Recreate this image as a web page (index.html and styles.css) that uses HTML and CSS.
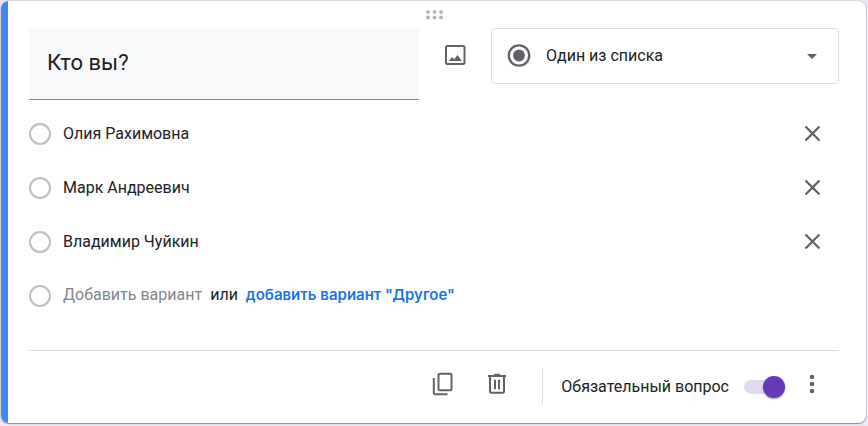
FILE: index.html
```html
<!DOCTYPE html>
<html lang="ru">
<head>
<meta charset="utf-8">
<title>Вопрос</title>
<link rel="stylesheet" href="styles.css">
</head>
<body>
<main class="card">
  <div class="drag">
    <svg width="18" height="10" viewBox="0 0 18 10" fill="#b4b4b4" aria-hidden="true"><circle cx="3" cy="2" r="1.900"/><circle cx="9.500" cy="2" r="1.900"/><circle cx="16" cy="2" r="1.900"/><circle cx="3" cy="7.500" r="1.900"/><circle cx="9.500" cy="7.500" r="1.900"/><circle cx="16" cy="7.500" r="1.900"/></svg>
  </div>
  <header class="head">
    <input class="question" type="text" value="Кто вы?" aria-label="Вопрос">
    <button class="icon-btn image-btn" type="button" aria-label="Добавить изображение">
      <svg width="24" height="24" viewBox="0 0 24 24" fill="none" aria-hidden="true"><rect x="3" y="3" width="18.500" height="18" rx="1.500" stroke="#5f6368" stroke-width="2"/><path fill="#5f6368" d="M6 18l3-4 2.200 2.300 3.300-4.300 4.300 6z"/></svg>
    </button>
    <div class="type">
      <svg class="type-icon" width="24" height="24" viewBox="0 0 24 24" fill="none" aria-hidden="true"><circle cx="12" cy="11.500" r="10.200" stroke="#5f6368" stroke-width="2.300"/><circle cx="12" cy="11.500" r="5.900" fill="#5f6368"/></svg>
      <select class="type-select" aria-label="Тип вопроса"><option>Один из списка</option></select>
      <svg class="type-arrow" width="10" height="5" viewBox="0 0 10 5" aria-hidden="true"><path fill="#5f6368" d="M0 0h10L5 5z"/></svg>
    </div>
  </header>
  <ul class="options">
    <li class="option">
      <input class="radio" type="radio" name="o" aria-label="Олия Рахимовна">
      <input class="text" type="text" value="Олия Рахимовна" aria-label="Вариант 1">
      <button class="icon-btn" type="button" aria-label="Удалить вариант 1"><svg width="16" height="16" viewBox="0 0 16 16" aria-hidden="true"><path d="M1.500 .5l14 14M15.500 .5l-14 14" stroke="#5f6368" stroke-width="2.200"/></svg></button>
    </li>
    <li class="option">
      <input class="radio" type="radio" name="o" aria-label="Марк Андреевич">
      <input class="text" type="text" value="Марк Андреевич" aria-label="Вариант 2">
      <button class="icon-btn" type="button" aria-label="Удалить вариант 2"><svg width="16" height="16" viewBox="0 0 16 16" aria-hidden="true"><path d="M1.500 .5l14 14M15.500 .5l-14 14" stroke="#5f6368" stroke-width="2.200"/></svg></button>
    </li>
    <li class="option">
      <input class="radio" type="radio" name="o" aria-label="Владимир Чуйкин">
      <input class="text" type="text" value="Владимир Чуйкин" aria-label="Вариант 3">
      <button class="icon-btn" type="button" aria-label="Удалить вариант 3"><svg width="16" height="16" viewBox="0 0 16 16" aria-hidden="true"><path d="M1.500 .5l14 14M15.500 .5l-14 14" stroke="#5f6368" stroke-width="2.200"/></svg></button>
    </li>
    <li class="option">
      <input class="radio" type="radio" name="o" aria-label="Новый вариант">
      <div class="add">
        <button class="add-option" type="button">Добавить вариант</button>
        <span>или</span>
        <button class="add-other" type="button">добавить вариант "Другое"</button>
      </div>
    </li>
  </ul>
  <footer class="foot">
    <button class="icon-btn" type="button" aria-label="Создать копию">
      <svg width="24" height="24" viewBox="0 0 24 24" fill="none" stroke="#5f6368" stroke-width="2" aria-hidden="true"><rect x="7.500" y="1.800" width="13" height="16.500" rx="1.500"/><path d="M2.800 6v14.500Q2.800 22.300 4.300 22.300H16.500"/></svg>
    </button>
    <button class="icon-btn" type="button" aria-label="Удалить">
      <svg width="24" height="24" viewBox="0 0 24 24" fill="none" stroke="#5f6368" stroke-width="2" aria-hidden="true"><path d="M3 4h18M9 2.800h6M5 4v15.300Q5 20.800 6.500 20.800h11Q19 20.800 19 19.300V4M10 7.800v9.500M14 7.800v9.500"/></svg>
    </button>
    <div class="required">
      <label for="required">Обязательный вопрос</label>
      <input class="switch" id="required" type="checkbox" role="switch" checked>
    </div>
    <button class="icon-btn more" type="button" aria-label="Ещё">
      <svg width="6" height="20" viewBox="0 0 6 20" fill="#5f6368" aria-hidden="true"><circle cx="3" cy="3" r="2.300"/><circle cx="3" cy="10" r="2.300"/><circle cx="3" cy="17" r="2.300"/></svg>
    </button>
  </footer>
</main>
</body>
</html>
```
FILE: styles.css
```css
* { box-sizing: border-box; }

body {
  margin: 0;
  padding: 1px 2px 2px 1px;
  background: #ece8f5;
  color: #202124;
  font: 16px/24px Roboto, "Liberation Sans", sans-serif;
}

button, input, select {
  margin: 0;
  padding: 0;
  border: 0;
  background: none;
  color: inherit;
  font: inherit;
}

svg { display: block; }

.card {
  position: relative;
  padding: 9px 27px 12px 28px;
  border-radius: 8px;
  background: #fff;
  box-shadow: 0 1px 1px #8f8c99, 0 0 2px #aaa8b2;
  overflow: hidden;
}

.card::before {
  content: "";
  position: absolute;
  inset: 0 auto 0 0;
  width: 7px;
  background: #4285f4;
}

.drag {
  display: flex;
  justify-content: center;
  height: 18px;
}

.head {
  display: grid;
  grid-template-columns: 390fr 72px 348fr;
  align-items: start;
}

.question {
  width: 100%;
  height: 72px;
  padding: 0 18px 2px;
  border-bottom: 1px solid #80868b;
  background: #f8f9fa;
  font-size: 22px;
}

.icon-btn {
  display: flex;
  flex: none;
  align-items: center;
  justify-content: center;
  width: 54px;
  height: 54px;
}

.image-btn { justify-self: center; }

.type {
  position: relative;
  height: 56px;
  border: 1px solid #dadce0;
  border-radius: 4px;
}

.type-select {
  width: 100%;
  height: 100%;
  padding: 0 54px;
  appearance: none;
}

.type-icon, .type-arrow {
  position: absolute;
  inset: 0 auto 0 15px;
  margin: auto 0;
  pointer-events: none;
}

.type-arrow { inset: 0 21px 0 auto; }

.options {
  margin: 7px 0 0;
  padding: 0;
  list-style: none;
}

.option {
  display: flex;
  align-items: center;
  gap: 12px;
  height: 54px;
}

.radio {
  flex: none;
  width: 22px;
  height: 22px;
  border: 2px solid #bdbdbd;
  border-radius: 50%;
  appearance: none;
}

.text {
  flex: 1;
  min-width: 0;
}

.add {
  display: flex;
  align-items: center;
  gap: 8px;
  padding-bottom: 2px;
}

.add-option { color: #80868b; }

.add-other {
  color: #1a73e8;
  font-family: Inter, Roboto, sans-serif;
  font-size: 15px;
  font-weight: 600;
}

.foot {
  display: flex;
  align-items: center;
  justify-content: flex-end;
  margin-top: 27px;
  padding-top: 6px;
  border-top: 1px solid #dadce0;
}

.required {
  display: flex;
  align-items: center;
  gap: 15px;
  height: 36px;
  margin: 4px 0 0 18px;
  padding: 2px 0 0 18px;
  border-left: 1px solid #dadce0;
}

.switch {
  display: flex;
  align-items: center;
  justify-content: flex-end;
  width: 41px;
  height: 14px;
  border-radius: 7px;
  background: #e1d8f1;
  appearance: none;
}

.switch::before {
  content: "";
  width: 22px;
  height: 22px;
  border-radius: 50%;
  background: #673ab7;
  box-shadow: 0 1px 2px #9a94a6;
}
```
